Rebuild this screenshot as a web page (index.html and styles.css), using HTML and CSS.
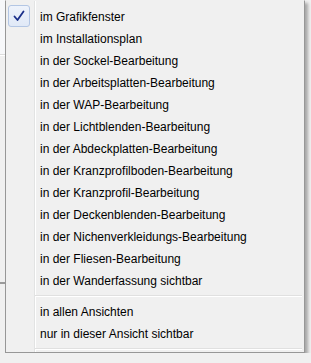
FILE: index.html
```html
<!DOCTYPE html>
<html lang="de">
<head>
    <meta charset="UTF-8">
    <title>Sichtbarkeit</title>
    <link rel="stylesheet" href="styles.css">
</head>
<body>
    <div class="menu">
        <div class="item checked">
            <span class="check">
                <svg width="12" height="12" viewBox="0 0 12 12"><path d="M1.5 6.5 L4.5 10 L10.5 1.5" fill="none" stroke="#1a2f8a" stroke-width="1.8" stroke-linecap="round" stroke-linejoin="round"/></svg>
            </span>
            <span class="label">im Grafikfenster</span>
        </div>
        <div class="item"><span class="check"></span><span class="label">im Installationsplan</span></div>
        <div class="item"><span class="check"></span><span class="label">in der Sockel-Bearbeitung</span></div>
        <div class="item"><span class="check"></span><span class="label">in der Arbeitsplatten-Bearbeitung</span></div>
        <div class="item"><span class="check"></span><span class="label">in der WAP-Bearbeitung</span></div>
        <div class="item"><span class="check"></span><span class="label">in der Lichtblenden-Bearbeitung</span></div>
        <div class="item"><span class="check"></span><span class="label">in der Abdeckplatten-Bearbeitung</span></div>
        <div class="item"><span class="check"></span><span class="label">in der Kranzprofilboden-Bearbeitung</span></div>
        <div class="item"><span class="check"></span><span class="label">in der Kranzprofil-Bearbeitung</span></div>
        <div class="item"><span class="check"></span><span class="label">in der Deckenblenden-Bearbeitung</span></div>
        <div class="item"><span class="check"></span><span class="label">in der Nichenverkleidungs-Bearbeitung</span></div>
        <div class="item"><span class="check"></span><span class="label">in der Fliesen-Bearbeitung</span></div>
        <div class="item"><span class="check"></span><span class="label">in der Wanderfassung sichtbar</span></div>
        <div class="sep"></div>
        <div class="item"><span class="check"></span><span class="label">in allen Ansichten</span></div>
        <div class="item"><span class="check"></span><span class="label">nur in dieser Ansicht sichtbar</span></div>
        <div class="sep last"></div>
    </div>
</body>
</html>
```
FILE: styles.css
```css
body{
    margin: 0;
    background-color: #f0f0f0;
    background-image:
        linear-gradient(to bottom, #f7f8fa 0, #f7f8fa 54px, #dcdcdc 54px, #dcdcdc 55px, #ffffff 55px, #ffffff 56px, transparent 56px),
        linear-gradient(to bottom, transparent 282px, #9a9a9a 282px, #9a9a9a 284px, transparent 284px);
    background-size: 5px 100%, 5px 100%;
    background-repeat: no-repeat;
    font-family: "Liberation Sans", Arial, sans-serif;
    font-size: 12px;
    color: #000;
}
.menu{
    width: 294px;
    margin-left: 5px;
    padding: 4px 2px 0 2px;
    border: 1px solid #979797;
    border-top-color: #f0f0f0;
    background-color: #f0f0f0;
    background-image: linear-gradient(to right, transparent 28px, #e2e3e3 28px, #e2e3e3 29px, #ffffff 29px, #ffffff 30px, transparent 30px);
    box-shadow: 3px 3px 3px rgba(0, 0, 0, 0.3);
}
.item{
    display: flex;
    align-items: center;
    height: 22px;
}
.check{
    width: 22px;
    height: 22px;
    box-sizing: border-box;
    display: flex;
    align-items: center;
    justify-content: center;
    flex-shrink: 0;
}
.checked .check{
    border: 1px solid #b3c6e4;
    border-radius: 3px;
    background: linear-gradient(to bottom, #eef3fb, #e0e9f7);
}
.label{
    margin-left: 10px;
    padding-top: 1px;
    white-space: nowrap;
}
.sep{
    height: 9px;
    margin-left: 27px;
    background-image: linear-gradient(to bottom, transparent 4px, #e0e0e0 4px, #e0e0e0 5px, #ffffff 5px, #ffffff 6px, transparent 6px);
}
.sep.last{
    height: 8px;
}
```
